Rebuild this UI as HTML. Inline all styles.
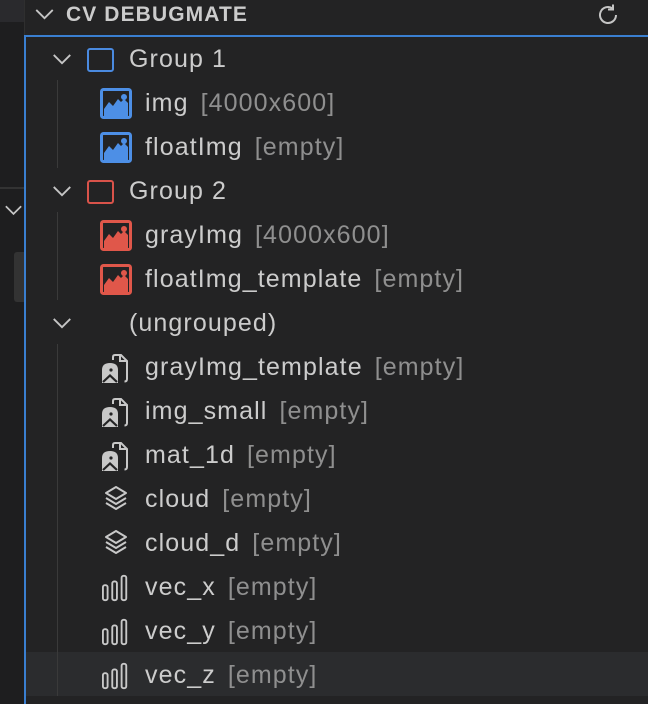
<!DOCTYPE html>
<html><head><meta charset="utf-8"><style>
body{margin:0;width:648px;height:704px;background:#232324;overflow:hidden;position:relative;font-family:"Liberation Sans",sans-serif;}
.abs{position:absolute}
.t{position:absolute;font-size:25px;letter-spacing:1.1px;color:#cccccc;white-space:nowrap;line-height:44px;height:44px}
.t span{color:#8f8f8f;margin-left:12px}
svg{position:absolute;overflow:visible}
</style></head><body>
<svg width="0" height="0" style="position:absolute">
<defs>
<symbol id="img" viewBox="0 0 32 31"><rect x="1.5" y="1.5" width="29" height="28" rx="2" fill="none" stroke="currentColor" stroke-width="3"/><path d="M4 29 L4 21 L9 14 L13 18 L18 11 L21 14 L24 11 L28 15 L28 29 Z" fill="currentColor"/><circle cx="24" cy="9" r="3" fill="currentColor"/></symbol>
<symbol id="file" viewBox="0 0 28 30"><path d="M12 7 V4 Q12 2 14 2 H20 L26 8 V26 Q26 28.5 23.5 28.5" fill="none" stroke="#c8c8c8" stroke-width="2"/><path d="M19 2 V8 H26" fill="none" stroke="#c8c8c8" stroke-width="2"/><path d="M1 17 Q1 10 9 10 Q17 10 17 17 V30 H1 Z" fill="#c8c8c8"/><path d="M2 29 L9 22.5 L16 29" fill="none" stroke="#232324" stroke-width="2.2"/><circle cx="10" cy="17" r="1.6" fill="#232324"/></symbol>
<symbol id="layers" viewBox="0 0 24 28"><g fill="none" stroke="#c8c8c8" stroke-width="2" stroke-linejoin="round"><path d="M12 2 L22 8 L12 14 L2 8 Z"/><path d="M2 13 L12 19 L22 13"/><path d="M2 18 L12 24 L22 18"/></g></symbol>
<symbol id="bars" viewBox="0 0 30 30"><g fill="none" stroke="#c8c8c8" stroke-width="2"><rect x="1" y="12" width="5" height="16" rx="2"/><rect x="11" y="8" width="5" height="20" rx="2"/><rect x="21" y="2" width="5" height="26" rx="2"/></g></symbol>
<symbol id="chev" viewBox="0 0 20 12"><path d="M1 1 L10 10 L19 1" fill="none" stroke="#c5c5c5" stroke-width="2"/></symbol>
</defs></svg>

<div class="abs" style="left:0;top:0;width:24px;height:704px;background:#1e1e1f"></div>
<div class="abs" style="left:0;top:0;width:24px;height:22px;background:#2a2a2d"></div>
<div class="abs" style="left:0;top:187px;width:24px;height:2px;background:#333"></div>
<svg class="abs" style="left:5px;top:205px" width="17" height="11"><use href="#chev" width="17" height="11"/></svg>
<div class="abs" style="left:14px;top:252px;width:10px;height:50px;background:#333;border-radius:3px 0 0 3px"></div>
<div class="abs" style="left:24px;top:0;width:1px;height:36px;background:#2f2f2f"></div>
<div class="abs" style="left:24px;top:35px;width:624px;height:2px;background:#3a7fd0"></div>
<div class="abs" style="left:24px;top:35px;width:2px;height:669px;background:#3a7fd0"></div>

<svg class="abs" style="left:35px;top:9px" width="19" height="11"><use href="#chev" width="19" height="11"/></svg>
<div class="abs" style="left:66px;top:2px;font-size:21px;font-weight:bold;letter-spacing:1.1px;color:#cccccc;line-height:26px">CV DEBUGMATE</div>
<svg class="abs" style="left:596px;top:3px" width="24" height="24" viewBox="0 0 24 24"><path d="M20 12 A8 8 0 1 1 16.5 5.4" fill="none" stroke="#c5c5c5" stroke-width="2"/><path d="M17 1.5 V6.5 H12" fill="none" stroke="#c5c5c5" stroke-width="2"/></svg>

<div class="abs" style="left:26px;top:652px;width:622px;height:44px;background:#2b2c2e"></div>
<div class="abs" style="left:57px;top:80px;width:1px;height:88px;background:#3a3a3a"></div>
<div class="abs" style="left:57px;top:212px;width:1px;height:88px;background:#3a3a3a"></div>
<div class="abs" style="left:57px;top:344px;width:1px;height:352px;background:#3a3a3a"></div>

<svg class="abs" style="left:52px;top:54px" width="20" height="11"><use href="#chev" width="20" height="11"/></svg>
<div class="abs" style="left:87px;top:48px;width:23px;height:20px;border:2px solid #4a8ae0;border-radius:3px"></div>
<div class="t" style="left:129px;top:37px">Group 1</div>
<svg style="left:100px;top:88px;color:#4d8fe6" width="32" height="31"><use href="#img" width="32" height="31"/></svg>
<div class="t" style="left:145px;top:81px">img<span>[4000x600]</span></div>
<svg style="left:100px;top:132px;color:#4d8fe6" width="32" height="31"><use href="#img" width="32" height="31"/></svg>
<div class="t" style="left:145px;top:125px">floatImg<span>[empty]</span></div>

<svg class="abs" style="left:52px;top:186px" width="20" height="11"><use href="#chev" width="20" height="11"/></svg>
<div class="abs" style="left:87px;top:180px;width:23px;height:20px;border:2px solid #d9534a;border-radius:3px"></div>
<div class="t" style="left:129px;top:169px">Group 2</div>
<svg style="left:100px;top:220px;color:#e0574a" width="32" height="31"><use href="#img" width="32" height="31"/></svg>
<div class="t" style="left:145px;top:213px">grayImg<span>[4000x600]</span></div>
<svg style="left:100px;top:264px;color:#e0574a" width="32" height="31"><use href="#img" width="32" height="31"/></svg>
<div class="t" style="left:145px;top:257px">floatImg_template<span>[empty]</span></div>

<svg class="abs" style="left:52px;top:318px" width="20" height="11"><use href="#chev" width="20" height="11"/></svg>
<div class="t" style="left:129px;top:301px">(ungrouped)</div>
<svg style="left:101px;top:353px" width="28" height="30"><use href="#file" width="28" height="30"/></svg>
<div class="t" style="left:145px;top:345px">grayImg_template<span>[empty]</span></div>
<svg style="left:101px;top:397px" width="28" height="30"><use href="#file" width="28" height="30"/></svg>
<div class="t" style="left:145px;top:389px">img_small<span>[empty]</span></div>
<svg style="left:101px;top:441px" width="28" height="30"><use href="#file" width="28" height="30"/></svg>
<div class="t" style="left:145px;top:433px">mat_1d<span>[empty]</span></div>
<svg style="left:104px;top:485px" width="24" height="28"><use href="#layers" width="24" height="28"/></svg>
<div class="t" style="left:145px;top:477px">cloud<span>[empty]</span></div>
<svg style="left:104px;top:529px" width="24" height="28"><use href="#layers" width="24" height="28"/></svg>
<div class="t" style="left:145px;top:521px">cloud_d<span>[empty]</span></div>
<svg style="left:102px;top:573px" width="28" height="30"><use href="#bars" width="28" height="30"/></svg>
<div class="t" style="left:145px;top:565px">vec_x<span>[empty]</span></div>
<svg style="left:102px;top:617px" width="28" height="30"><use href="#bars" width="28" height="30"/></svg>
<div class="t" style="left:145px;top:609px">vec_y<span>[empty]</span></div>
<svg style="left:102px;top:661px" width="28" height="30"><use href="#bars" width="28" height="30"/></svg>
<div class="t" style="left:145px;top:653px">vec_z<span>[empty]</span></div>
</body></html>
